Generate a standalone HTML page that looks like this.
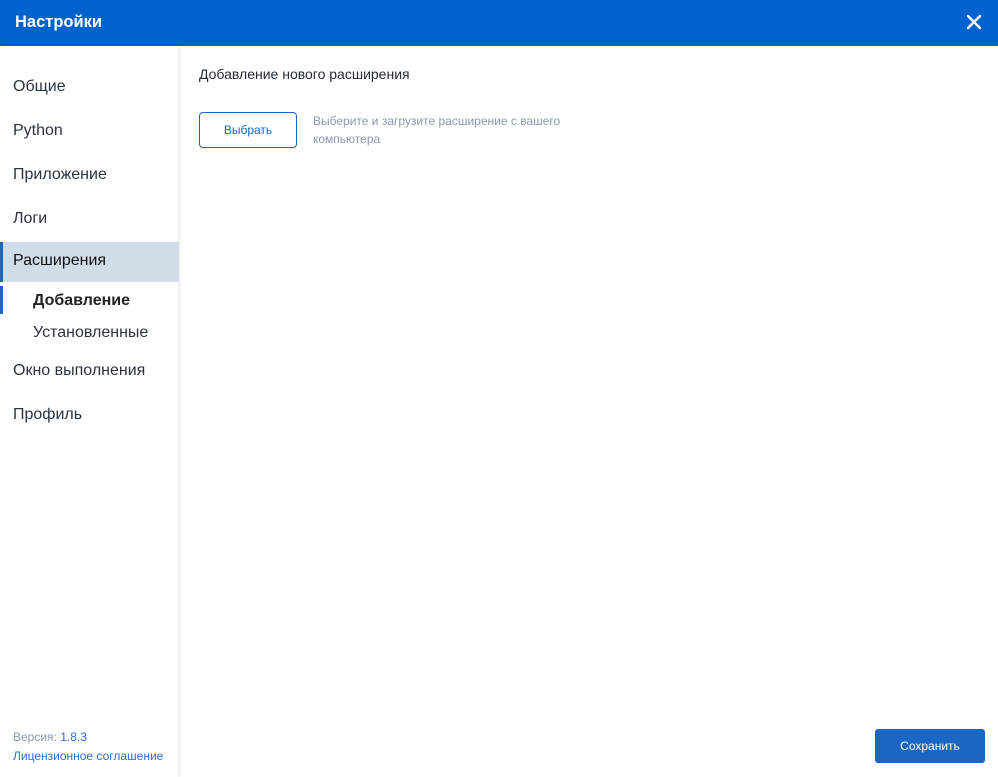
<!DOCTYPE html>
<html><head><meta charset="utf-8"><style>
*{margin:0;padding:0;box-sizing:border-box}
body{width:998px;height:777px;overflow:hidden;font-family:"Liberation Sans",sans-serif;background:#fff;position:relative}
.hdr{position:absolute;left:0;top:0;width:998px;height:46px;background:#0062cc;color:#fff}
.hdr .t{position:absolute;left:15px;top:13px;font-size:16px;font-weight:bold}
.side{position:absolute;left:0;top:46px;width:179px;height:731px;background:#fff;box-shadow:1px 0 3px rgba(0,0,0,0.08);border-right:1px solid #eef0f2}
.it{position:absolute;left:13px;font-size:16px;color:#2a3441}
.sel{position:absolute;left:0;top:196px;width:179px;height:40px;background:#d2dce8;border-left:3px solid #1a66c4}
.sub{position:absolute;left:33px;font-size:16px;color:#222}
.t{white-space:nowrap}
</style></head><body>
<div class="hdr"><div class="t" style="top:13px;font-size:16.5px">Настройки</div>
<svg style="position:absolute;left:966px;top:14px" width="16" height="16" viewBox="0 0 16 16"><path d="M2 2L14 14M14 2L2 14" stroke="#fff" stroke-width="2.4" stroke-linecap="round"/></svg></div>
<div class="side">
<div class="it t" style="top:32px">Общие</div>
<div class="it t" style="top:76px">Python</div>
<div class="it t" style="top:120px">Приложение</div>
<div class="it t" style="top:164px">Логи</div>
<div class="sel"></div>
<div class="it t" style="top:206px;color:#111">Расширения</div>
<div style="position:absolute;left:0;top:240px;width:3px;height:28px;background:#1a66c4"></div>
<div class="sub t" style="top:246px;font-weight:bold">Добавление</div>
<div class="sub t" style="top:278px;color:#2a3441">Установленные</div>
<div class="it t" style="top:316px">Окно выполнения</div>
<div class="it t" style="top:360px">Профиль</div>
<div class="t" style="position:absolute;left:13px;top:684px;font-size:12px;color:#8a9ab0">Версия: <span style="color:#2a6fd0">1.8.3</span></div>
<div class="t" style="position:absolute;left:13px;top:703px;font-size:12px;color:#2a6fd0">Лицензионное соглашение</div>
</div>
<div class="t" style="position:absolute;left:199px;top:66px;font-size:14px;color:#222b38">Добавление нового расширения</div>
<div style="position:absolute;left:199px;top:112px;width:98px;height:36px;border:1px solid #1a66c4;border-radius:4px;color:#1a66c4;font-size:12px;text-align:center;line-height:34px">Выбрать</div>
<div style="position:absolute;left:313px;top:112px;width:270px;font-size:12px;line-height:18px;color:#8898ad">Выберите и загрузите расширение с вашего компьютера</div>
<div style="position:absolute;left:875px;top:729px;width:110px;height:34px;background:#1a66c4;border-radius:3px;color:#fff;font-size:12px;text-align:center;line-height:34px">Сохранить</div>
</body></html>
